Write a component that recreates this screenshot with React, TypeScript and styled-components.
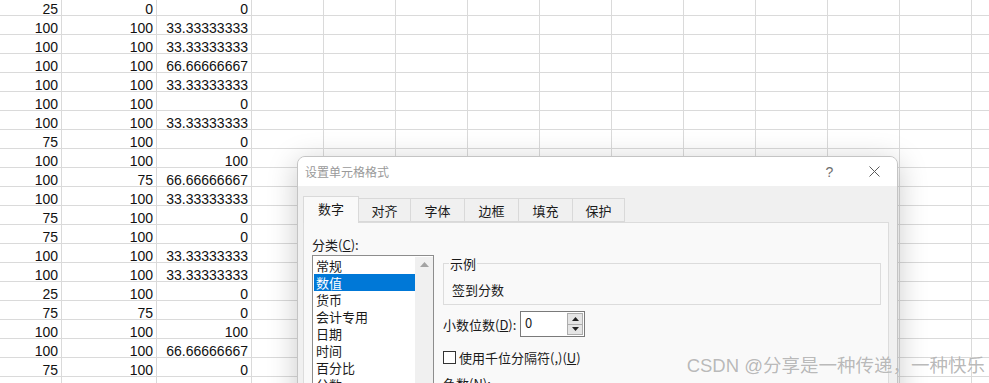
import React from "react";
import styled, { createGlobalStyle } from "styled-components";

const GlobalStyle = createGlobalStyle`
    html, body {
        margin: 0;
        padding: 0;
        width: 989px;
        height: 383px;
        overflow: hidden;
        background: #ffffff;
    }
`;

const Page = styled.div`
    position: relative;
    width: 989px;
    height: 383px;
    overflow: hidden;
    background: #ffffff;
`;

// ---------- spreadsheet ----------

const Sheet = styled.div`
    display: grid;
    grid-template-columns: 62px 95px 95px repeat(11, 72px);
    grid-auto-rows: 19px;
    margin-top: -3px;
`;

const Cell = styled.div`
    box-sizing: border-box;
    height: 19px;
    padding: 3px 3px 0 0;
    border-right: 1px solid #dadada;
    border-bottom: 1px solid #dadada;
    font-family: "Liberation Sans", Arial, sans-serif;
    font-size: 14px;
    line-height: 18px;
    color: #111;
    text-align: right;
    overflow: hidden;
    white-space: nowrap;
`;

const rows: string[][] = [
    ["25", "0", "0"],
    ["100", "100", "33.33333333"],
    ["100", "100", "33.33333333"],
    ["100", "100", "66.66666667"],
    ["100", "100", "33.33333333"],
    ["100", "100", "0"],
    ["100", "100", "33.33333333"],
    ["75", "100", "0"],
    ["100", "100", "100"],
    ["100", "75", "66.66666667"],
    ["100", "100", "33.33333333"],
    ["75", "100", "0"],
    ["75", "100", "0"],
    ["100", "100", "33.33333333"],
    ["100", "100", "33.33333333"],
    ["25", "100", "0"],
    ["75", "75", "0"],
    ["100", "100", "100"],
    ["100", "100", "66.66666667"],
    ["75", "100", "0"],
    ["", "", ""],
];

const EXTRA_COLS = 11;

// ---------- dialog ----------

const Dialog = styled.div`
    position: absolute;
    left: 297px;
    top: 156px;
    width: 601px;
    height: 260px;
    box-sizing: border-box;
    border: 1px solid #c4c4c4;
    border-radius: 8px 8px 0 0;
    background: #f0f0f0;
    box-shadow: 0 6px 30px rgba(0, 0, 0, 0.22);
    display: flex;
    flex-direction: column;
    overflow: hidden;
    font-family: "Noto Sans CJK SC", "Liberation Sans", sans-serif;
    font-size: 13px;
    color: #1a1a1a;
`;

const TitleBar = styled.div`
    height: 29px;
    flex-shrink: 0;
    background: #ffffff;
    display: flex;
    align-items: center;
    padding: 0 0 0 7px;
`;

const Title = styled.span`
    flex: 1;
    font-size: 12px;
    color: #9a9a9a;
    line-height: 16px;
`;

const TitleButton = styled.span`
    width: 45px;
    display: flex;
    justify-content: center;
    align-items: center;
    color: #6e6e6e;
    font-family: "Liberation Sans", sans-serif;
    font-size: 14px;
`;

const DialogBody = styled.div`
    flex: 1;
    padding: 10px 8px 0 5px;
    display: flex;
    flex-direction: column;
`;

const TabRow = styled.div`
    display: flex;
    align-items: flex-end;
    height: 26px;
    position: relative;
    z-index: 1;
`;

const Tab = styled.div<{ $active?: boolean; $w: number }>`
    box-sizing: border-box;
    width: ${(p) => p.$w}px;
    height: ${(p) => (p.$active ? 27 : 24)}px;
    margin-bottom: ${(p) => (p.$active ? -1 : 0)}px;
    margin-left: -1px;
    display: flex;
    align-items: center;
    justify-content: center;
    padding-bottom: ${(p) => (p.$active ? 3 : 0)}px;
    border: 1px solid #d9d9d9;
    border-bottom: ${(p) => (p.$active ? "none" : "1px solid #d9d9d9")};
    background: ${(p) => (p.$active ? "#f9f9f9" : "#f0f0f0")};
    line-height: 17px;
    &:first-child {
        margin-left: 0;
    }
`;

const Panel = styled.div`
    flex: 1;
    background: #f9f9f9;
    border: 1px solid #dcdcdc;
    display: grid;
    grid-template-columns: 122px 1fr;
    column-gap: 9px;
    padding: 13px 7px 0 8px;
    align-items: start;
`;

const LeftCol = styled.div`
    display: flex;
    flex-direction: column;
`;

const Label = styled.div`
    line-height: 17px;
    white-space: nowrap;
`;

const ListBox = styled.div`
    margin-top: 2px;
    box-sizing: border-box;
    width: 122px;
    height: 140px;
    border: 1px solid #8d8d8d;
    background: #ffffff;
    display: flex;
    padding: 1px 0 0 1px;
`;

const ListItems = styled.div`
    flex: 1;
    display: flex;
    flex-direction: column;
`;

const ListItem = styled.div<{ $selected?: boolean }>`
    height: 17px;
    line-height: 17px;
    padding-left: 2px;
    overflow: hidden;
    background: ${(p) => (p.$selected ? "#0078d7" : "transparent")};
    color: ${(p) => (p.$selected ? "#ffffff" : "#1a1a1a")};
`;

const ScrollTrack = styled.div`
    width: 18px;
    background: #f0f0f0;
    display: flex;
    justify-content: center;
    padding-top: 5px;
    box-sizing: border-box;
`;

const RightCol = styled.div`
    display: flex;
    flex-direction: column;
    padding-top: 19px;
`;

const SampleBox = styled.fieldset`
    margin: 0;
    height: 50px;
    box-sizing: border-box;
    border: 1px solid #dcdcdc;
    padding: 9px 8px 0 8px;
    line-height: 17px;
`;

const SampleLegend = styled.legend`
    padding: 0 1px;
    margin-left: -3px;
    line-height: 17px;
`;

const FieldRow = styled.div`
    display: flex;
    align-items: center;
    margin-top: 6px;
`;

const FieldLabel = styled.span`
    width: 77px;
    line-height: 17px;
    white-space: nowrap;
`;

const SpinBox = styled.div`
    box-sizing: border-box;
    width: 65px;
    height: 26px;
    border: 1px solid #7a7a7a;
    background: #ffffff;
    display: flex;
    align-items: stretch;
`;

const SpinValue = styled.span`
    flex: 1;
    padding-left: 4px;
    line-height: 22px;
    font-size: 13px;
`;

const SpinButtons = styled.div`
    width: 16px;
    margin: 1px 1px 1px 0;
    display: flex;
    flex-direction: column;
`;

const SpinButton = styled.div`
    flex: 1;
    box-sizing: border-box;
    border: 1px solid #adadad;
    background: #e5e5e5;
    display: flex;
    align-items: center;
    justify-content: center;
    & + & {
        border-top: none;
    }
`;

const CheckRow = styled.div`
    display: flex;
    align-items: center;
    gap: 3px;
    margin-top: 12px;
    line-height: 17px;
`;

const CheckBox = styled.span`
    box-sizing: border-box;
    width: 13px;
    height: 13px;
    border: 1px solid #333333;
    background: #ffffff;
`;

const NegLabel = styled.div`
    margin-top: 9px;
    line-height: 17px;
`;

const Watermark = styled.div`
    position: absolute;
    right: 4px;
    top: 355px;
    font-family: "Liberation Sans", "Noto Sans CJK SC", sans-serif;
    font-size: 18.5px;
    line-height: 22px;
    color: rgba(140, 140, 140, 0.62);
    text-shadow: 0 0 1px rgba(255, 255, 255, 0.9);
    white-space: nowrap;
`;

const Triangle = ({ up, color }: { up: boolean; color: string }) => (
    <svg width="7" height="4" viewBox="0 0 7 4">
        <path d={up ? "M0 4 L3.5 0 L7 4 Z" : "M0 0 L3.5 4 L7 0 Z"} fill={color} />
    </svg>
);

const tabs = [
    { name: "数字", w: 56 },
    { name: "对齐", w: 53 },
    { name: "字体", w: 55 },
    { name: "边框", w: 55 },
    { name: "填充", w: 55 },
    { name: "保护", w: 53 },
];

const categories = ["常规", "数值", "货币", "会计专用", "日期", "时间", "百分比", "分数"];

const App = () => {
    return (
        <Page>
            <GlobalStyle />
            <Sheet>
                {rows.map((r, i) => (
                    <React.Fragment key={i}>
                        <Cell>{r[0]}</Cell>
                        <Cell>{r[1]}</Cell>
                        <Cell>{r[2]}</Cell>
                        {Array.from({ length: EXTRA_COLS }).map((_, j) => (
                            <Cell key={j} />
                        ))}
                    </React.Fragment>
                ))}
            </Sheet>

            <Dialog>
                <TitleBar>
                    <Title>设置单元格格式</Title>
                    <TitleButton>?</TitleButton>
                    <TitleButton>
                        <svg width="11" height="11" viewBox="0 0 11 11">
                            <path d="M0.5 0.5 L10.5 10.5 M10.5 0.5 L0.5 10.5" stroke="#5a5a5a" strokeWidth="1" />
                        </svg>
                    </TitleButton>
                </TitleBar>
                <DialogBody>
                    <TabRow>
                        {tabs.map((t, i) => (
                            <Tab key={t.name} $active={i === 0} $w={t.w}>
                                {t.name}
                            </Tab>
                        ))}
                    </TabRow>
                    <Panel>
                        <LeftCol>
                            <Label>
                                分类(<u>C</u>):
                            </Label>
                            <ListBox>
                                <ListItems>
                                    {categories.map((c, i) => (
                                        <ListItem key={c} $selected={i === 1}>
                                            {c}
                                        </ListItem>
                                    ))}
                                </ListItems>
                                <ScrollTrack>
                                    <svg width="9" height="5" viewBox="0 0 9 5">
                                        <path d="M0 5 L4.5 0 L9 5 Z" fill="#a3a3a3" />
                                    </svg>
                                </ScrollTrack>
                            </ListBox>
                        </LeftCol>
                        <RightCol>
                            <SampleBox>
                                <SampleLegend>示例</SampleLegend>
                                签到分数
                            </SampleBox>
                            <FieldRow>
                                <FieldLabel>
                                    小数位数(<u>D</u>):
                                </FieldLabel>
                                <SpinBox>
                                    <SpinValue>0</SpinValue>
                                    <SpinButtons>
                                        <SpinButton>
                                            <Triangle up color="#222" />
                                        </SpinButton>
                                        <SpinButton>
                                            <Triangle up={false} color="#222" />
                                        </SpinButton>
                                    </SpinButtons>
                                </SpinBox>
                            </FieldRow>
                            <CheckRow>
                                <CheckBox />
                                <span>
                                    使用千位分隔符(,)(<u>U</u>)
                                </span>
                            </CheckRow>
                            <NegLabel>
                                负数(<u>N</u>):
                            </NegLabel>
                        </RightCol>
                    </Panel>
                </DialogBody>
            </Dialog>

            <Watermark>CSDN @分享是一种传递，一种快乐</Watermark>
        </Page>
    );
};

export default App;
